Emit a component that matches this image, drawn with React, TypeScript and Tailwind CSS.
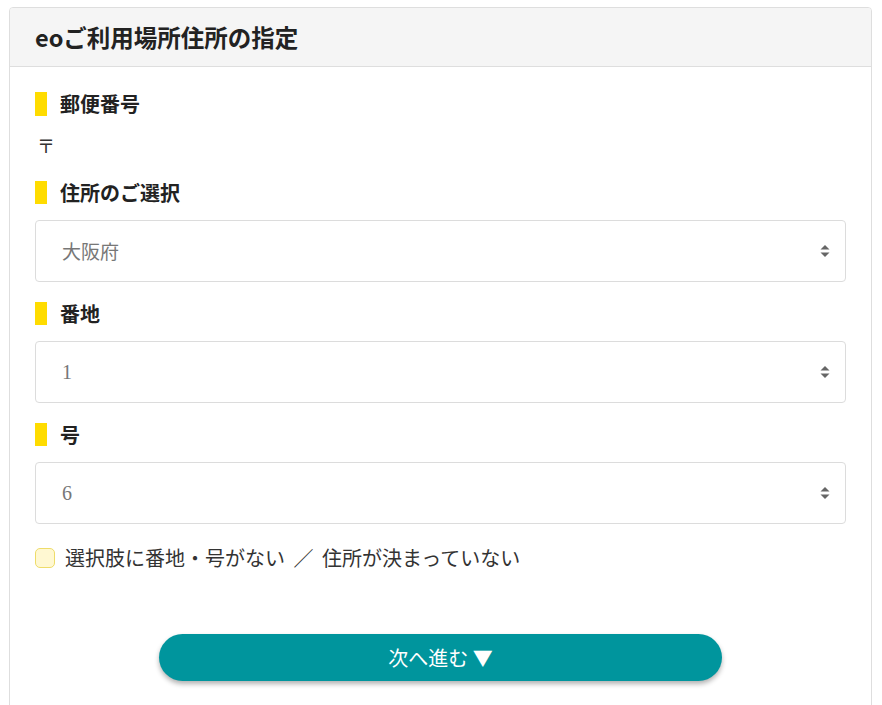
import React from 'react';

const fontStack = '"Noto Sans CJK JP", "Noto Sans", sans-serif';

const Label = ({ text, tall }: { text: string; tall?: boolean }) => (
  <div className={`flex items-center gap-[13px] ${tall ? 'h-6' : 'h-[23px]'}`}>
    <span className={`block w-3 bg-[#ffdc00] ${tall ? 'h-6' : 'h-[23px]'}`}></span>
    <span className="text-[20px] font-bold text-[#222] leading-6">{text}</span>
  </div>
);

const Arrows = () => (
  <svg width="10" height="14" viewBox="0 0 10 14" className="shrink-0">
    <path d="M5 1 L9.5 5.5 H0.5 Z" fill="#666" />
    <path d="M5 13 L9.5 8.5 H0.5 Z" fill="#666" />
  </svg>
);

const SelectBox = ({ value, serif }: { value: string; serif?: boolean }) => (
  <div className="flex items-center justify-between h-[62px] border border-[#dcdcdc] rounded-[4px] pl-[26px] pr-[15px] bg-white">
    <span
      className="text-[19px] text-[#777]"
      style={serif ? { fontFamily: '"Liberation Serif", serif', fontSize: '20px' } : undefined}
    >
      {value}
    </span>
    <Arrows />
  </div>
);

export default function App() {
  return (
    <div className="bg-white min-h-[705px] pt-[7px] pl-[9px]" style={{ fontFamily: fontStack }}>
      <div className="w-[863px] border border-[#dedede] rounded-t-[4px] overflow-hidden">
        <div className="h-[59px] bg-[#f5f5f5] border-b border-[#dedede] flex items-center px-[25px]">
          <h1 className="text-[23.5px] font-bold text-[#222] leading-none pt-[1px]">eoご利用場所住所の指定</h1>
        </div>
        <div className="px-[25px] pt-[25px] pb-[40px]">
          <Label text="郵便番号" tall />
          <div className="mt-[17px] h-6 flex items-center pl-[2px] text-[18px] text-[#333]">〒</div>

          <div className="mt-[24px]">
            <Label text="住所のご選択" />
          </div>
          <div className="mt-[16px]">
            <SelectBox value="大阪府" />
          </div>

          <div className="mt-[20px]">
            <Label text="番地" />
          </div>
          <div className="mt-[16px]">
            <SelectBox value="1" serif />
          </div>

          <div className="mt-[20px]">
            <Label text="号" />
          </div>
          <div className="mt-[16px]">
            <SelectBox value="6" serif />
          </div>

          <label className="mt-[24px] h-5 flex items-center gap-[10px]">
            <span className="block w-5 h-5 shrink-0 rounded-[5px] bg-[#fff8d2] border border-[#eedc6a]"></span>
            <span className="text-[20px] leading-5 text-[#333] [word-spacing:4px]">選択肢に番地・号がない ／ 住所が決まっていない</span>
          </label>

          <div className="mt-[66px] flex justify-center">
            <button className="w-[563px] h-[47px] rounded-full bg-[#00959d] text-white text-[20px] leading-none shadow-[0_3px_5px_rgba(0,0,0,0.3)]">
              次へ進む ▼
            </button>
          </div>
        </div>
      </div>
    </div>
  );
}
